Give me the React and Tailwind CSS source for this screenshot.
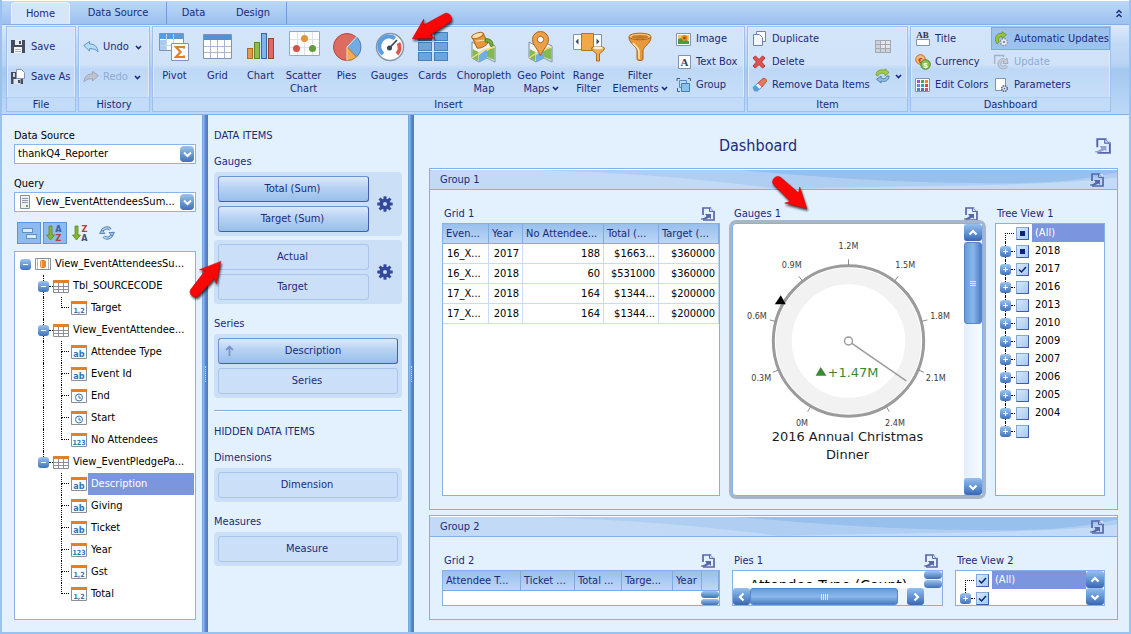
import React, { useState } from 'react';
import clsx from 'clsx';

const Svg = ({ w = 16, h = 16, className, children }) => (
  <svg width={w} height={h} viewBox={`0 0 ${w} ${h}`} className={clsx('shrink-0', className)} fill="none" aria-hidden="true">
    {children}
  </svg>
);

/* ---------- small icons ---------- */

const Chevron = () => (
  <Svg w={7} h={5}>
    <path d="M1 1l2.500 2.500L6 1" stroke="#1b2a7d" strokeWidth="1.600" />
  </Svg>
);

const SaveIcon = () => (
  <Svg>
    <path d="M0 1h14v13H0z" fill="#454c5c" />
    <path d="M4 1h7v5H4z" fill="#e8edf5" />
    <path d="M8 2h2v3H8z" fill="#454c5c" />
    <path d="M3 8h8v6H3z" fill="#f4f6fa" />
    <path d="M4 10.500h6M4 12.500h6" stroke="#aab3c4" />
  </Svg>
);

const SaveAsIcon = () => (
  <Svg>
    <path d="M0 3h12v12H0z" fill="#454c5c" />
    <path d="M2.500 10h7v5h-7z" fill="#dfe6f0" />
    <path d="M7 11h2v3H7z" fill="#454c5c" />
    <path d="M5.500 0.500h5l3 3v6h-8z" fill="#fff" stroke="#8796b4" />
    <path d="M2 4h2v4H2z" fill="#cfd7e6" />
  </Svg>
);

const UndoIcon = () => (
  <Svg>
    <path d="M0.700 6.500L6.500 2.500v2.500c5 0 8 2.500 8.500 8-2-2.500-4.500-3.500-8.500-3.300v2.300z" fill="#b9dcf4" stroke="#5a95c6" />
  </Svg>
);

const RedoIcon = () => (
  <Svg>
    <path d="M15.300 6.500L9.500 2.500v2.500c-5 0-8 2.500-8.500 8 2-2.500 4.500-3.500 8.500-3.300v2.300z" fill="#bfc3cd" stroke="#9ba4b8" />
  </Svg>
);

const ImageIcon = () => (
  <Svg>
    <path d="M0.500 2.500h14v12h-14z" fill="#fff" stroke="#7f93b5" />
    <path d="M2 4h11v5H2z" fill="#f7c66b" />
    <path d="M2 8l4-1 7 3v3H2z" fill="#4d9a3a" />
    <circle cx="8.500" cy="7" r="3" fill="#e8891c" />
    <circle cx="8.500" cy="7" r="1.200" fill="#8c4a12" />
  </Svg>
);

const TextBoxIcon = () => (
  <Svg>
    <path d="M2.500 1.500h12v13h-12z" fill="#fff" stroke="#7f93b5" />
    <text x="8.500" y="12" textAnchor="middle" fontFamily="Liberation Serif, serif" fontWeight="bold" fontSize="11" fill="#33405f">A</text>
  </Svg>
);

const GroupIcon = () => (
  <Svg>
    <path d="M3.500 3.500h7v7h-7z" fill="#b9dcf4" stroke="#4f8fc4" />
    <path d="M5.500 6.500h8v8h-8z" fill="#8cc2ea" stroke="#3f7fba" />
    <path d="M1 4V1.500h3M12 1.500h2.500V4M1.500 11v3.500H4" stroke="#4a5a7c" />
  </Svg>
);

const DuplicateIcon = () => (
  <Svg>
    <path d="M4.500 0.500h9v10h-9z" fill="#fff" stroke="#6d83b3" />
    <path d="M1.500 3.500h6l3 3v8h-9z" fill="#f3f7fd" stroke="#6d83b3" />
  </Svg>
);

const DeleteIcon = () => (
  <Svg>
    <path d="M1 4l2.500-2L7 5.500l3.500-3.500L13 4 9.500 8l3.500 4-2.500 2L7 10.500 3.500 14 1 12l3.500-4z" fill="#e0524e" stroke="#b23232" />
  </Svg>
);

const EraserIcon = () => (
  <Svg>
    <path d="M6 6l5-4.500c1.500-.8 4 .8 3.500 3L10 10z" fill="#e9775c" stroke="#b9533a" />
    <path d="M6 6l4 4-4.500 4H2.500L1 10.500z" fill="#e9f1fb" stroke="#6f93c4" />
    <path d="M1 10.500L3.500 8l4 4-2 2H2.500z" fill="#5b9bdc" />
  </Svg>
);

const GridGrayIcon = () => (
  <Svg>
    <path d="M0 2h16v13H0z" fill="#a3a8b1" />
    {[3, 7, 11].map((y) =>
      [1, 6, 11].map((x) => <rect key={`${x}-${y}`} x={x} y={y} width="4" height="3" fill={x === 1 || y === 11 ? '#cdd1d8' : '#e3e6ea'} />)
    )}
  </Svg>
);

const ConvertIcon = () => (
  <Svg>
    <path d="M1 7c0-5 6-6 9-4.500V.8l4 3.700-4 3.500V6C7 4.500 4 5 3 8z" fill="#a5ca4b" stroke="#6f9a28" strokeWidth="0.800" />
    <path d="M14 8c0 5-5 6.500-8 5v2l-4.500-3.700 4.500-3.300v2c3 1.500 5 .5 6-2z" fill="#8fbde3" stroke="#45739f" strokeWidth="0.800" />
  </Svg>
);

const TitleIcon = () => (
  <Svg>
    <text x="7.500" y="7" textAnchor="middle" fontFamily="Liberation Serif, serif" fontWeight="bold" fontSize="9" fill="#2c3350">AB</text>
    <path d="M1.500 8.500h13v6h-13z" fill="#fff" stroke="#7f93b5" />
  </Svg>
);

const CurrencyIcon = () => (
  <Svg>
    <circle cx="5.500" cy="5.500" r="4.800" fill="#f6b98a" stroke="#d3641c" />
    <text x="5.500" y="8.500" textAnchor="middle" fontFamily="Liberation Sans, sans-serif" fontWeight="bold" fontSize="8" fill="#b8480f">€</text>
    <circle cx="10.500" cy="10.500" r="4.800" fill="#8fc04a" stroke="#4f8424" />
    <text x="10.500" y="13.500" textAnchor="middle" fontFamily="Liberation Sans, sans-serif" fontWeight="bold" fontSize="8" fill="#fff">$</text>
  </Svg>
);

const swatches = ['#8b5cc0', '#57a244', '#ea8a2f', '#4f8fdc', '#3f9fb0', '#d9483b', '#4f7fd0', '#7a5cc0', '#c0508a'];

const ColorsIcon = () => (
  <Svg>
    <path d="M0.500 1.500h14v13h-14z" fill="#fff" stroke="#7f93b5" />
    {swatches.map((c, i) => (
      <rect key={c} x={2 + (i % 3) * 4} y={3 + Math.floor(i / 3) * 4} width="3" height="3" fill={c} />
    ))}
  </Svg>
);

const AutoUpdateIcon = () => (
  <Svg>
    <path d="M3 13C-1 7 3 1.500 8 2.500V.8l4.500 3L8 7.500v-2C5 5 3.500 8 5 11z" fill="#9bc53d" stroke="#62902a" strokeWidth="0.800" />
    <circle cx="10" cy="11" r="3.500" fill="#eef2f7" stroke="#8d97a8" strokeWidth="1.500" strokeDasharray="1.800 0.900" />
    <circle cx="10" cy="11" r="1.300" fill="#8d97a8" />
  </Svg>
);

const UpdateIcon = () => (
  <Svg>
    <path d="M0.500 10V1.500h9V3" stroke="#a7b0c0" strokeWidth="1.500" />
    <path d="M13.500 13c-3 3-9 2-9.500-2.500-.5-5 4.500-7 7.500-5L13 4l1 5.500H9l1.300-1.800C8 7 6 8.500 6.800 10.700c.7 1.800 3 2 4.500.3z" fill="#c9ced8" stroke="#98a2b5" strokeWidth="0.800" />
  </Svg>
);

const ParametersIcon = () => (
  <Svg>
    <path d="M1.500 1.500h10v12h-10z" fill="#fff" stroke="#7f93b5" />
    <circle cx="10.500" cy="11.500" r="2.800" fill="#dfe6f0" stroke="#55637f" strokeDasharray="1.500 0.700" strokeWidth="1.500" />
    <circle cx="10.500" cy="11.500" r="0.800" fill="#55637f" />
  </Svg>
);

const ExportIcon = ({ large }) => (
  <svg width={large ? 16 : 14} height={large ? 16 : 14} viewBox="0 0 14 14" className="shrink-0" fill="none" aria-hidden="true">
    <path d="M2 8V1h7.500L13 4.500V13H2" stroke="#5766ab" strokeWidth="1.700" />
    <path d="M9 1l4 4V1z" fill="#e3f0fe" fillOpacity="0.800" />
    <path d="M8.500 1v3.500h4.200" stroke="#5766ab" />
    <path d="M0 11.500c2.500 0 4.500-1 5.500-2.500L4 7h6v5L8.300 10.500C6.500 12 3 13 0 12.500z" fill={large ? '#95a3d6' : '#5766ab'} />
  </svg>
);

const Gear = () => (
  <Svg>
    <circle cx="8" cy="8" r="3.800" stroke="#34489c" strokeWidth="3.600" />
    {[0, 45, 90, 135, 180, 225, 270, 315].map((a) => (
      <rect key={a} x="6.500" y="0.300" width="3" height="3.500" fill="#34489c" transform={`rotate(${a} 8 8)`} />
    ))}
  </Svg>
);

/* ---------- large ribbon icons ---------- */

const PivotIcon = () => (
  <Svg w={32} h={32}>
    <path d="M0.500 2.500h24v17h-24z" fill="#fff" stroke="#7f93b5" />
    <path d="M1 3h23v5H1z" fill="#5b9bdb" />
    <path d="M1 9h6v10H1z" fill="#a9ccef" />
    <path d="M1 14.500h23M7.500 3v16M14.500 3v16" stroke="#c3d3e9" />
    <path d="M12.500 12.500h17v17h-17z" fill="#f8fafd" stroke="#7f93b5" />
    <path d="M25 17.500V16h-8l4.500 5-4.500 5h8v-1.500" stroke="#e0822a" strokeWidth="2.200" />
  </Svg>
);

const GridIcon = () => (
  <Svg w={32} h={32}>
    <path d="M1.500 3.500h28v24h-28z" fill="#fff" stroke="#7f93b5" />
    <path d="M2 4h27v5H2z" fill="#4f93d6" />
    <path d="M2 15.500h27M2 21.500h27M8.500 9v18M15.500 9v18M22.500 9v18" stroke="#a9b6cd" />
  </Svg>
);

const ChartIcon = () => (
  <Svg w={32} h={32}>
    <rect x="2.500" y="17.500" width="5" height="10" fill="#e79a45" stroke="#b36a1c" />
    <rect x="9.500" y="11.500" width="5" height="16" fill="#8dbd4d" stroke="#5a8a28" />
    <rect x="16.500" y="2.500" width="5" height="25" fill="#7db4ea" stroke="#36699f" />
    <rect x="23.500" y="7.500" width="5" height="20" fill="#dd6b62" stroke="#a83a36" />
  </Svg>
);

const ScatterIcon = () => (
  <Svg w={32} h={32}>
    <path d="M1.500 0.500h30v24h-30z" fill="#fdfdfd" stroke="#9aa7bd" />
    <path d="M2 8.500h29M2 16.500h29M9.500 1v23M16.500 1v23M24.500 1v23" stroke="#dde2ea" />
    <circle cx="16.500" cy="7.500" r="3.500" fill="#e2943c" />
    <circle cx="8.500" cy="17.500" r="3.500" fill="#d25149" />
    <circle cx="24.500" cy="17.500" r="3.500" fill="#5f9d3a" />
  </Svg>
);

const PiesIcon = () => (
  <Svg w={32} h={32}>
    <circle cx="16" cy="16" r="13.500" fill="#dd6b60" stroke="#b5443d" />
    <path d="M16 16L25.500 6A13.500 13.500 0 0 1 25.500 26z" fill="#73ace2" stroke="#4b82bd" />
    <path d="M16 16L25.500 26A13.500 13.500 0 0 1 16 29.500z" fill="#efab55" stroke="#c07c28" />
    <path d="M16 16V29.500" stroke="#fbe3df" />
    <path d="M16 16L25.500 6" stroke="#e9f2fb" />
  </Svg>
);

const GaugesIcon = () => (
  <Svg w={32} h={32}>
    <circle cx="16" cy="16" r="13.500" fill="#fff" stroke="#8794ad" strokeWidth="1.500" />
    <path d="M9 23A9.500 9.500 0 0 1 21 7.500" stroke="#5d9fdd" strokeWidth="4" />
    <path d="M24.500 12A9.500 9.500 0 0 1 23 23" stroke="#d9574d" strokeWidth="4" />
    <circle cx="15.500" cy="17" r="2.500" fill="#3a4762" />
    <path d="M15.500 17L23 9" stroke="#3a4762" strokeWidth="1.800" />
  </Svg>
);

const CardsIcon = () => (
  <Svg w={32} h={32}>
    {[1.5, 11.5, 21.5].map((y) =>
      [1.5, 17.5].map((x) => <rect key={`${x}-${y}`} x={x} y={y} width="13" height="8" fill="#6aa5de" stroke="#4680bd" />)
    )}
  </Svg>
);

const MapSheet = () => (
  <>
    <path d="M4 11l7 4 8-4 8 4v16l-8-4-8 4-7-4z" fill="#eef3f5" stroke="#7d8da8" />
    <path d="M4.500 18l6 3v9l-6-3zM19 20l7.500-5v14L19 26z" fill="#83b952" />
    <path d="M11 24l8-6v9l-8 4z" fill="#6fb0e4" />
    <path d="M4 27L16 19l11-3" stroke="#f2d878" strokeWidth="1.500" />
  </>
);

const ChoroplethIcon = () => (
  <Svg w={32} h={32}>
    <MapSheet />
    <path d="M4 6l5 11c3 1 9-2 11-5L15 2z" fill="#e9973b" stroke="#a8631b" />
    <ellipse cx="9.500" cy="4.500" rx="6" ry="2.500" fill="#fbe0a8" stroke="#a8631b" transform="rotate(-20 9.500 4.500)" />
    <path d="M8 10c5 0 9-1 13-2" stroke="#fbe0a8" strokeWidth="1.200" />
    <path d="M17 8c5-1 8 2 8 6 0 2-3 2-3 0 0-3-2-3-5-3z" fill="#7cae37" stroke="#4f7f22" />
  </Svg>
);

const GeoIcon = () => (
  <Svg w={32} h={32}>
    <MapSheet />
    <path d="M15.500 25C13 18 7.500 14 7.500 8.500a8 8 0 0 1 16 0C23.500 14 18 18 15.500 25z" fill="#eba04a" stroke="#a8631b" />
    <circle cx="15.500" cy="8.500" r="3.200" fill="#fff" stroke="#a8631b" />
  </Svg>
);

const RangeIcon = () => (
  <Svg w={34} h={32}>
    <path d="M1.500 3.500h28v15h-28z" fill="#fff" stroke="#8291ac" />
    <path d="M9.500 2.500h12v17h-12z" fill="#f0a848" stroke="#b7741f" />
    <path d="M6.500 7.500v6L3.500 10.500zM24.500 7.500v6l3-3z" fill="#3d4a66" />
    <path d="M19.500 17c0-1.500 13-1.500 13 0 0 3-4 4-5 6v7h-3v-7c-1-2-5-3-5-6z" fill="#efab55" stroke="#ab6a1d" />
    <ellipse cx="26" cy="17" rx="5" ry="1.300" fill="#fff0d2" />
  </Svg>
);

const FilterIcon = () => (
  <Svg w={32} h={32}>
    <path d="M5 6c0 7 8 9 8 14v8c0 2 6 2 6 0v-8c0-5 8-7 8-14z" fill="#e8993d" stroke="#a8631b" />
    <ellipse cx="16" cy="5.500" rx="11" ry="3.300" fill="#f9c777" stroke="#a8631b" />
    <ellipse cx="16" cy="6" rx="8.500" ry="2" fill="#c77a26" />
    <path d="M9 12c2 3 6 4 6 9v7" stroke="#ffe1ab" strokeWidth="1.600" />
  </Svg>
);

/* ---------- tree icons ---------- */

const TableIcon = () => (
  <Svg>
    <path d="M0.500 2.500h15v12h-15z" fill="#fff" stroke="#8b8f98" />
    <path d="M0 2h16v3H0z" fill="#e0812a" />
    <path d="M1 8.500h14M1 11.500h14M5.500 5v9M10.500 5v9" stroke="#8b8f98" />
  </Svg>
);

const QueryIcon = () => (
  <Svg>
    <path d="M0.500 2.500h15v11h-15z" fill="#fff" stroke="#8b8f98" />
    <path d="M2.500 3v10M13.500 3v10" stroke="#b7bbc3" />
    <rect x="5" y="4" width="6" height="8" rx="2" fill="#e58a33" />
    <path d="M6.500 5v6" stroke="#fbd3a0" />
  </Svg>
);

const FieldIcon = ({ kind }) => (
  <Svg>
    <path d="M0.500 2.500h15v12h-15z" fill="#fff" stroke="#8b8f98" />
    <path d="M0 1h16v3H0z" fill="#e0812a" />
    {kind === 'time' ? (
      <>
        <circle cx="8" cy="9.500" r="3.500" stroke="#2e75b6" />
        <path d="M8 7.500v2.500h2" stroke="#2e75b6" />
      </>
    ) : (
      <text x="8" y="13" textAnchor="middle" fontFamily="DejaVu Sans Condensed, sans-serif" fontWeight="bold" fontSize={kind === 'ab' ? 9 : 7} fill="#2e75b6">
        {kind}
      </text>
    )}
  </Svg>
);

const ServerIcon = () => (
  <Svg>
    <path d="M3.500 1.500h9v13h-9z" fill="#eef0f3" stroke="#8b8f98" />
    <path d="M5 4.500h6M5 6.500h6M5 8.500h6" stroke="#9298a3" />
    <path d="M9 11h2v2H9z" fill="#6ca53c" />
  </Svg>
);

const SortIcon = ({ first, second, firstColor, secondColor }) => (
  <Svg w={18} h={18}>
    <path d="M3 2h3v9h2.500l-4 5-4-5H3z" fill="#86b436" stroke="#5c8a1e" strokeWidth="0.800" />
    <text x="12.500" y="8" textAnchor="middle" fontFamily="DejaVu Sans Condensed, sans-serif" fontWeight="bold" fontSize="9" fill={firstColor}>{first}</text>
    <text x="12.500" y="17" textAnchor="middle" fontFamily="DejaVu Sans Condensed, sans-serif" fontWeight="bold" fontSize="9" fill={secondColor}>{second}</text>
  </Svg>
);

const GroupFieldsIcon = () => (
  <Svg>
    <rect x="1.500" y="3.500" width="10" height="4" fill="#d9eaf8" stroke="#6292c0" />
    <rect x="5.500" y="9.500" width="10" height="4" fill="#d9eaf8" stroke="#6292c0" />
  </Svg>
);

const RefreshIcon = () => (
  <Svg>
    <path d="M3 9a5 5 0 0 1 8.500-4.500M13 7a5 5 0 0 1-8.500 4.500" stroke="#4f7cb0" strokeWidth="3" />
    <path d="M3 9a5 5 0 0 1 8.500-4.500M13 7a5 5 0 0 1-8.500 4.500" stroke="#c3dff6" strokeWidth="1.200" />
    <path d="M10 7.500h5.500L13 11zM6 8.500H.5L3 5z" fill="#9cc6ea" stroke="#4f7cb0" strokeWidth="0.800" />
  </Svg>
);

const RedArrow = ({ angle, className }) => (
  <svg width="48" height="48" viewBox="-24 -24 48 48" className={clsx('pointer-events-none absolute z-10 overflow-visible drop-shadow-[1px_2px_1px_rgba(0,0,0,0.7)]', className)} aria-hidden="true">
    <path
      d="M-18 -5C-23 -4 -23 4 -18 5L6 6L3 11L23 0L3 -11L6 -6Z"
      fill="#f90606"
      stroke="#d00000"
      strokeWidth="0.500"
      strokeLinejoin="round"
      transform={`rotate(${angle})`}
    />
  </svg>
);

/* ---------- ribbon ---------- */

const RibbonGroup = ({ label, className, children }) => (
  <section className={clsx('flex h-[86px] shrink-0 flex-col border border-[#9dc1ee] bg-[linear-gradient(#d4e5f9_0%,#cfe2f8_45%,#bdd8f6_50%,#cce1f9_100%)] shadow-[inset_0_0_0_1px_#dceafb]', className)}>
    <div className="flex flex-1">{children}</div>
    <h2 className="h-3.5 border-t border-[#b3cff1] bg-[#c1dbf8] text-center leading-[14px]">{label}</h2>
  </section>
);

const SmallButton = ({ icon, label, menu, disabled, active, className }) => (
  <button
    type="button"
    disabled={disabled}
    className={clsx('flex items-center gap-1 whitespace-nowrap', disabled && 'text-[#8fa9d6]', active && 'bg-[#9cc2f0] shadow-[inset_0_0_0_1px_#7fabe4]', className)}
  >
    {icon}
    <span>{label}</span>
    {menu && <span className="ml-0.5"><Chevron /></span>}
  </button>
);

const LargeButton = ({ icon, lines, menu, className, children }) => (
  <div className={clsx('relative flex', className)}>
    <button type="button" className="flex w-full flex-col items-center pt-1 leading-[13px] whitespace-nowrap">
      {icon}
      <span className="mt-1.5">{lines[0]}</span>
      {lines[1] && (
        <span className="flex items-center gap-0.5">
          {lines[1]}
          {menu && <Chevron />}
        </span>
      )}
    </button>
    {children}
  </div>
);

const tabs = [
  { name: 'Home', className: 'w-[59px]' },
  { name: 'Data Source', className: 'w-[97px] border-r border-[#6f9ad8]' },
  { name: 'Data', className: 'w-[53px]' },
  { name: 'Design', className: 'w-[67px] border-r border-[#6f9ad8]' },
];

const Ribbon = () => {
  const [tab, setTab] = useState('Home');

  return (
    <header>
      <nav className="flex h-6 items-end border-t border-white bg-[linear-gradient(#bcd8f8,#9bc1ee)] pl-[9px]">
        {tabs.map((t) => (
          <button
            key={t.name}
            type="button"
            onClick={() => setTab(t.name)}
            className={clsx('h-[22px] leading-[20px]', t.className, t.name === tab && 'rounded-t-sm border border-b-0 border-[#e9f2fd] bg-[#d6e6fa]')}
          >
            {t.name}
          </button>
        ))}
        <button type="button" aria-label="Collapse ribbon" className="mr-1.5 mb-1.5 ml-auto">
          <Svg w={8} h={9}>
            <path d="M1.500 4L4 1.500 6.500 4M1.500 8L4 5.500 6.500 8" stroke="#1b2a7d" strokeWidth="1.400" />
          </Svg>
        </button>
      </nav>

      <div className="flex gap-0.5 border-t border-b border-[#86aee6] bg-[linear-gradient(#dceafb_0%,#c3daf6_20%,#b8d3f4_45%,#a5c8f0_50%,#bcd8f7_100%)] pt-px pb-0.5 pl-1">
        <RibbonGroup label="File" className="w-[70px]">
          <div className="flex flex-col pt-[5px] pl-1">
            <SmallButton icon={<SaveIcon />} label="Save" className="h-[30px]" />
            <SmallButton icon={<SaveAsIcon />} label="Save As" className="h-[30px]" />
          </div>
        </RibbonGroup>

        <RibbonGroup label="History" className="w-[72px]">
          <div className="flex flex-col pt-[5px] pl-1">
            <SmallButton icon={<UndoIcon />} label="Undo" menu className="h-[30px]" />
            <SmallButton icon={<RedoIcon />} label="Redo" menu disabled className="h-[30px]" />
          </div>
        </RibbonGroup>

        <RibbonGroup label="Insert" className="w-[593px]">
          <LargeButton icon={<PivotIcon />} lines={['Pivot']} className="w-[43px]" />
          <LargeButton icon={<GridIcon />} lines={['Grid']} className="w-[43px]" />
          <LargeButton icon={<ChartIcon />} lines={['Chart']} className="w-[43px]" />
          <LargeButton icon={<ScatterIcon />} lines={['Scatter', 'Chart']} className="w-[43px]" />
          <LargeButton icon={<PiesIcon />} lines={['Pies']} className="w-[43px]" />
          <LargeButton icon={<GaugesIcon />} lines={['Gauges']} className="w-[43px]">
            <RedArrow angle={149} className="-top-6 left-10" />
          </LargeButton>
          <LargeButton icon={<CardsIcon />} lines={['Cards']} className="w-[43px]" />
          <LargeButton icon={<ChoroplethIcon />} lines={['Choropleth', 'Map']} className="w-[60px]" />
          <LargeButton icon={<GeoIcon />} lines={['Geo Point', 'Maps']} menu className="w-[54px]" />
          <LargeButton icon={<RangeIcon />} lines={['Range', 'Filter']} className="w-[41px]" />
          <LargeButton icon={<FilterIcon />} lines={['Filter', 'Elements']} menu className="w-[62px]" />
          <div className="flex flex-col pl-[5px]">
            <SmallButton icon={<ImageIcon />} label="Image" className="h-[23px]" />
            <SmallButton icon={<TextBoxIcon />} label="Text Box" className="h-[23px]" />
            <SmallButton icon={<GroupIcon />} label="Group" className="h-[23px]" />
          </div>
        </RibbonGroup>

        <RibbonGroup label="Item" className="w-[161px]">
          <div className="flex w-[127px] flex-col pl-1">
            <SmallButton icon={<DuplicateIcon />} label="Duplicate" className="h-[23px]" />
            <SmallButton icon={<DeleteIcon />} label="Delete" className="h-[23px]" />
            <SmallButton icon={<EraserIcon />} label="Remove Data Items" className="h-[23px]" />
          </div>
          <div className="flex flex-col pt-1">
            <button type="button" aria-label="Transpose" className="h-[30px]"><GridGrayIcon /></button>
            <button type="button" aria-label="Convert to" className="flex h-[30px] items-center gap-1"><ConvertIcon /><Chevron /></button>
          </div>
        </RibbonGroup>

        <RibbonGroup label="Dashboard" className="w-[201px]">
          <div className="flex w-20 flex-col pl-1">
            <SmallButton icon={<TitleIcon />} label="Title" className="h-[23px]" />
            <SmallButton icon={<CurrencyIcon />} label="Currency" className="h-[23px]" />
            <SmallButton icon={<ColorsIcon />} label="Edit Colors" className="h-[23px]" />
          </div>
          <div className="flex flex-1 flex-col">
            <SmallButton icon={<AutoUpdateIcon />} label="Automatic Updates" active className="h-[23px] pl-[3px]" />
            <SmallButton icon={<UpdateIcon />} label="Update" disabled className="h-[23px] pl-[3px]" />
            <SmallButton icon={<ParametersIcon />} label="Parameters" className="h-[23px] pl-[3px]" />
          </div>
        </RibbonGroup>
      </div>
    </header>
  );
};

/* ---------- data source pane ---------- */

const Select = ({ id, value, icon }) => (
  <div className="flex h-5 items-center border border-[#8db3e8] bg-white">
    {icon && <span className="pl-0.5">{icon}</span>}
    <div className="relative h-full min-w-0 flex-1">
      <select id={id} className="h-full w-full appearance-none bg-transparent pr-4 pl-[3px] text-black outline-none">
        <option>{value}</option>
      </select>
      <span className="pointer-events-none absolute top-px right-px flex h-4 w-[14px] items-center justify-center rounded-sm bg-[linear-gradient(#9cc4ef,#3f6fb8)]">
        <Svg w={9} h={7}>
          <path d="M1 1.500l3.500 3.500L8 1.500" stroke="#fff" strokeWidth="2" />
        </Svg>
      </span>
    </div>
  </div>
);

const Toggle = ({ open }) => (
  <button
    type="button"
    aria-label={open ? 'Collapse' : 'Expand'}
    className="flex h-[11px] w-[11px] shrink-0 items-center justify-center rounded-[3px] bg-[linear-gradient(#9cc4ef,#3e72bb)]"
  >
    <Svg w={7} h={7}>
      <path d={open ? 'M1 3.500h5' : 'M1 3.500h5M3.500 1v5'} stroke="#fff" />
    </Svg>
  </button>
);

const fields = [
  {
    name: 'Tbl_SOURCECODE',
    children: [{ name: 'Target', kind: '1,2' }],
  },
  {
    name: 'View_EventAttendee...',
    children: [
      { name: 'Attendee Type', kind: 'ab' },
      { name: 'Event Id', kind: 'ab' },
      { name: 'End', kind: 'time' },
      { name: 'Start', kind: 'time' },
      { name: 'No Attendees', kind: '123' },
    ],
  },
  {
    name: 'View_EventPledgePa...',
    children: [
      { name: 'Description', kind: 'ab', selected: true },
      { name: 'Giving', kind: 'ab' },
      { name: 'Ticket', kind: 'ab' },
      { name: 'Year', kind: '123' },
      { name: 'Gst', kind: '1,2' },
      { name: 'Total', kind: '1,2' },
    ],
  },
];

const FieldTree = () => (
  <ul className="mt-[7px] flex-1 border border-[#8db3e8] bg-white px-px pt-px whitespace-nowrap text-black">
    <li>
      <div className="flex h-[22px] items-center pl-1">
        <Toggle open />
        <span className="ml-1 flex items-center gap-1"><QueryIcon />View_EventAttendeesSu...</span>
      </div>
      <ul>
        {fields.map((table, t) => (
          <li key={table.name}>
            <div className="flex h-[22px] items-center pl-[22px]">
              <div className="flex h-full flex-col items-center">
                <span className="flex-1 border-l border-dotted border-black" />
                <Toggle open />
                <span className={clsx('flex-1 border-l border-dotted', t < fields.length - 1 ? 'border-black' : 'border-transparent')} />
              </div>
              <span className="w-1 border-t border-dotted border-black" />
              <span className="flex items-center gap-1"><TableIcon />{table.name}</span>
            </div>
            <ul>
              {table.children.map((field, i) => (
                <li key={field.name} className="flex h-[22px] items-center pl-[27px]">
                  <span className={clsx('h-full w-[18px] border-l border-dotted', t < fields.length - 1 ? 'border-black' : 'border-transparent')} />
                  <span className="mr-0.5 flex h-full w-2 flex-col">
                    <span className="h-[11px] border-b border-l border-dotted border-black" />
                    <span className={clsx('h-[11px] border-l border-dotted', i < table.children.length - 1 ? 'border-black' : 'border-transparent')} />
                  </span>
                  <FieldIcon kind={field.kind} />
                  <span className={clsx('ml-px h-full flex-1 pl-[3px] leading-[22px]', field.selected && 'bg-[#7b95de] text-white')}>{field.name}</span>
                </li>
              ))}
            </ul>
          </li>
        ))}
      </ul>
    </li>
  </ul>
);

const SourcePane = () => (
  <aside className="flex w-[200px] shrink-0 flex-col pt-[14px] pr-1.5 pb-3 pl-3">
    <label htmlFor="source" className="mb-px text-black">Data Source</label>
    <Select id="source" value="thankQ4_Reporter" />
    <label htmlFor="query" className="mt-[13px] mb-px text-black">Query</label>
    <Select id="query" value="View_EventAttendeesSum..." icon={<ServerIcon />} />
    <div className="mt-2.5 flex h-[22px] items-center gap-0.5 pl-[3px]">
      <button type="button" aria-label="Group fields" className="flex h-full w-6 items-center justify-center border border-[#5f93db] bg-[#8fbaf0]"><GroupFieldsIcon /></button>
      <button type="button" aria-label="Sort ascending" className="flex h-full w-6 items-center justify-center border border-[#5f93db] bg-[#8fbaf0]"><SortIcon first="A" second="Z" firstColor="#3a5fa8" secondColor="#c23a35" /></button>
      <button type="button" aria-label="Sort descending" className="flex h-full w-6 items-center justify-center"><SortIcon first="Z" second="A" firstColor="#c23a35" secondColor="#4b4f7a" /></button>
      <button type="button" aria-label="Refresh" className="flex h-full w-6 items-center justify-center"><RefreshIcon /></button>
    </div>
    <FieldTree />
  </aside>
);

const Splitter = () => (
  <div className="flex w-1.5 shrink-0 items-center justify-center bg-[linear-gradient(90deg,#6d9fdb_0,#8fbcf0_30%,#5d8fd0_50%,#4a78bd_100%)]">
    <span className="h-4 border-l border-dotted border-[#c9def6]" />
  </div>
);

/* ---------- data items pane ---------- */

const DataItem = ({ filled, sorted, children }) => (
  <button
    type="button"
    className={clsx(
      'flex h-[26px] w-full items-center rounded-[3px] border',
      filled ? 'border-[#6f93cf] border-r-[#4060ae] border-b-[#4060ae] bg-[linear-gradient(#dbe9fa_0%,#b7d2f2_45%,#97bfea_100%)]' : 'border-[#a9c3ea] bg-[#cbe0f8]'
    )}
  >
    {sorted && (
      <span className="-mr-2 w-5 pl-1.5">
        <Svg w={9} h={12}>
          <path d="M4.500 11V2M1 5l3.500-3.500L8 5" stroke="#7b93cc" strokeWidth="1.800" />
        </Svg>
      </span>
    )}
    <span className="flex-1 pr-0.5">{children}</span>
  </button>
);

const ItemBox = ({ gear, children }) => (
  <div className="flex items-center rounded bg-[#cbe0f7] p-1">
    <div className="flex flex-1 flex-col gap-1">{children}</div>
    {gear && <button type="button" aria-label="Options" className="ml-2 pr-[5px]"><Gear /></button>}
  </div>
);

const DataItemsPane = () => (
  <aside className="relative w-[200px] shrink-0 px-1.5 pt-[14px]">
    <h2>DATA ITEMS</h2>
    <h3 className="mt-3 mb-[3px]">Gauges</h3>
    <div className="flex flex-col gap-1">
      <ItemBox gear>
        <DataItem filled>Total (Sum)</DataItem>
        <DataItem filled>Target (Sum)</DataItem>
      </ItemBox>
      <ItemBox gear>
        <DataItem>Actual</DataItem>
        <DataItem>Target</DataItem>
      </ItemBox>
    </div>
    <h3 className="mt-[13px] mb-[3px]">Series</h3>
    <ItemBox>
      <DataItem filled sorted>Description</DataItem>
      <DataItem>Series</DataItem>
    </ItemBox>
    <hr className="mt-3 mb-[13px] h-0.5 border-t border-b border-t-[#86ade6] border-b-white" />
    <h2>HIDDEN DATA ITEMS</h2>
    <h3 className="mt-3 mb-[3px]">Dimensions</h3>
    <ItemBox><DataItem>Dimension</DataItem></ItemBox>
    <h3 className="mt-[13px] mb-[3px]">Measures</h3>
    <ItemBox><DataItem>Measure</DataItem></ItemBox>
    <RedArrow angle={-50} className="top-[140px] -left-[26px]" />
  </aside>
);

/* ---------- dashboard ---------- */

const ScrollButton = ({ dir, className }) => (
  <button type="button" aria-label={`Scroll ${dir}`} className={clsx('flex shrink-0 items-center justify-center overflow-hidden rounded-[3px] bg-[linear-gradient(#94bfee,#5a8dd0_60%,#3a66ae)]', className)}>
    <Svg w={10} h={10}>
      <path
        d={{ up: 'M1.500 6.500L5 3l3.500 3.500', down: 'M1.500 3.500L5 7l3.500-3.500', left: 'M6.500 1.500L3 5l3.500 3.500', right: 'M3.500 1.500L7 5 3.500 8.500' }[dir]}
        stroke="#fff"
        strokeWidth="2.200"
      />
    </Svg>
  </button>
);

// scroll bar of a box too low to hold its arrows
const TinyScroll = ({ className }) => (
  <div className={clsx('flex w-[18px] flex-col gap-px', className)}>
    <span className="flex-1 rounded-sm bg-[linear-gradient(#9cc5f1,#3f6fb8)]" />
    <span className="flex-1 rounded-sm bg-[linear-gradient(#9cc5f1,#3f6fb8)]" />
  </div>
);

const Widget = ({ title, exportable, className, children }) => (
  <section className={clsx('flex min-w-0 flex-col', className)}>
    <div className="flex h-4 items-start justify-between pr-[5px] pl-0.5">
      <h3>{title}</h3>
      {exportable && <button type="button" aria-label={`Export ${title}`}><ExportIcon /></button>}
    </div>
    {children}
  </section>
);

const GroupBox = ({ title, className, children }) => (
  <section className={clsx('flex flex-col border border-[#86b0e6]', className)}>
    <div className="relative flex h-[21px] items-center justify-between border-t border-b border-t-white border-b-[#86b0e6] bg-[linear-gradient(90deg,#c3daf6,#bfd8f5)] pr-[13px] pl-2.5">
      <svg className="absolute inset-0 h-full w-full" viewBox="0 0 688 20" preserveAspectRatio="none" aria-hidden="true">
        <path d="M110 0C200 3 280 10 350 20H688V0z" fill="#b0cef2" />
        <path d="M310 0C420 11 500 14 570 14S660 8 688 3V0z" fill="#98c0ed" />
        <path d="M350 20C480 16 620 18 688 8V20z" fill="#c3dbf7" />
      </svg>
      <h2 className="relative">{title}</h2>
      <button type="button" aria-label={`Export ${title}`} className="relative"><ExportIcon /></button>
    </div>
    {children}
  </section>
);

const thClass = 'h-5 border-r border-b border-[#7fabe4] bg-[linear-gradient(#98bfec,#bdd7f6)] pl-[3px] text-left font-normal whitespace-nowrap overflow-hidden';

const rows = [
  ['16_X...', '2017', '188', '$1663...', '$360000'],
  ['16_X...', '2018', '60', '$531000', '$360000'],
  ['17_X...', '2018', '164', '$1344...', '$200000'],
  ['17_X...', '2018', '164', '$1344...', '$200000'],
];

const GridOne = () => (
  <div className="flex-1 border border-[#86b0e6] bg-white">
    <table className="w-full table-fixed border-separate border-spacing-0">
      <colgroup>
        <col className="w-[46px]" />
        <col className="w-[34px]" />
        <col className="w-[81px]" />
        <col className="w-[55px]" />
        <col />
      </colgroup>
      <thead>
        <tr>
          {['Even...', 'Year', 'No Attendee...', 'Total (...', 'Target (...'].map((h) => (
            <th key={h} className={thClass}>{h}</th>
          ))}
        </tr>
      </thead>
      <tbody className="text-black">
        {rows.map((row, i) => (
          <tr key={i}>
            {row.map((cell, c) => (
              <td key={c} className={clsx('h-5 border-r border-b border-[#c9dcf5] whitespace-nowrap', c === 0 ? 'pl-1' : 'pr-[3px] text-right')}>{cell}</td>
            ))}
          </tr>
        ))}
      </tbody>
    </table>
  </div>
);

const scale = ['0M', '0.3M', '0.6M', '0.9M', '1.2M', '1.5M', '1.8M', '2.1M', '2.4M'];

const Gauge = () => (
  <svg viewBox="0 0 232 244" className="h-[244px] w-full" fontFamily="DejaVu Sans Condensed, sans-serif" role="img" aria-label="2016 Annual Christmas Dinner">
    <circle cx="116" cy="117" r="65" stroke="#f2f2f2" strokeWidth="16" fill="none" />
    <circle cx="116" cy="117" r="75.500" stroke="#9b9b9b" strokeWidth="3" fill="none" />
    {scale.map((label, i) => {
      const a = ((120 + i * 37.5) * Math.PI) / 180;
      const cos = Math.cos(a);
      const sin = Math.sin(a);
      const r = 96 - 3 * Math.abs(sin);
      return (
        <g key={label}>
          <line x1={116 + 76 * cos} y1={117 + 76 * sin} x2={116 + 82 * cos} y2={117 + 82 * sin} stroke="#8a8a8a" />
          <text x={116 + r * cos} y={120 + (r + 2) * sin} textAnchor="middle" fontSize="9" fill="#3c3c3c">{label}</text>
        </g>
      );
    })}
    <line x1="119" y1="119" x2="174" y2="157" stroke="#9b9b9b" strokeWidth="1.500" />
    <circle cx="116" cy="117" r="4" stroke="#9b9b9b" strokeWidth="1.500" fill="#fff" />
    <path d="M42 80l6-9 5 9z" fill="#000" />
    <path d="M83 152l5-9 6 9z" fill="#3a8a35" />
    <text x="95" y="153" fontSize="13" fontFamily="DejaVu Sans, sans-serif" fill="#3a8a35">+1.47M</text>
    <text x="115" y="217" textAnchor="middle" fontSize="13" fontFamily="DejaVu Sans, sans-serif" fill="#1c1c1c">2016 Annual Christmas</text>
    <text x="115" y="235" textAnchor="middle" fontSize="13" fontFamily="DejaVu Sans, sans-serif" fill="#1c1c1c">Dinner</text>
  </svg>
);

const GaugeBox = () => (
  <div className="flex flex-1 rounded-sm border border-[#86b0e6] bg-white ring-3 ring-[#a9b6c9]">
    <div className="min-w-0 flex-1"><Gauge /></div>
    <div className="flex w-[18px] flex-col bg-[linear-gradient(90deg,#e3eefb,#fafcff)]">
      <ScrollButton dir="up" className="h-[17px]" />
      <div className="mt-px flex h-[82px] flex-col items-center justify-center gap-px rounded-[3px] border border-[#5585c8] bg-[linear-gradient(90deg,#6a9bd8,#8ab8ec_50%,#4c7dc4)]">
        {[0, 1, 2].map((i) => <span key={i} className="h-px w-1.5 bg-[#d6e6fa]" />)}
      </div>
      <ScrollButton dir="down" className="mt-auto h-[17px]" />
    </div>
  </div>
);

const CheckBox = ({ label, state }) => {
  const [value, setValue] = useState(state);
  return (
    <span className="flex h-[13px] w-[13px] items-center justify-center border border-[#86a9dc] border-r-[#3f5da8] border-b-[#3f5da8] bg-[linear-gradient(135deg,#d6e8fb,#a9c8f0)]">
      <input
        type="checkbox"
        aria-label={label || '(blank)'}
        checked={Boolean(value)}
        onChange={(e) => setValue(e.target.checked ? 'on' : '')}
        className="absolute h-[13px] w-[13px] appearance-none"
      />
      {value === 'part' && <span className="h-[5px] w-[5px] bg-[#0b2474]" />}
      {value === 'on' && (
        <Svg w={9} h={9}>
          <path d="M1 4.500l2.500 2.500L8 2" stroke="#0b2474" strokeWidth="1.500" />
        </Svg>
      )}
    </span>
  );
};

const CheckTree = ({ items }) => (
  <ul className="min-w-0 flex-1 text-black">
    {items.map(([name, state], i) => (
      <li key={i} className="flex h-[18px] items-center pl-1">
        {i === 0 ? (
          <span className="mr-0.5 flex h-full flex-col justify-end pl-[5px]">
            <span className="h-[9px] w-[9px] border-t border-l border-dotted border-black" />
          </span>
        ) : (
          <>
            <span className="flex h-full flex-col items-center">
              <span className="flex-1 border-l border-dotted border-black" />
              <Toggle />
              <span className={clsx('flex-1 border-l border-dotted', i < items.length - 1 ? 'border-black' : 'border-transparent')} />
            </span>
            <span className="mr-px w-1 border-t border-dotted border-black" />
          </>
        )}
        <CheckBox label={name} state={state} />
        <span className={clsx('ml-[3px] h-full flex-1 pl-[3px] leading-[18px]', i === 0 && 'bg-[#7b95de] text-white')}>{name}</span>
      </li>
    ))}
  </ul>
);

const years = [
  ['(All)', 'part'], ['2018', 'part'], ['2017', 'on'], ['2016'], ['2013'], ['2010'],
  ['2009'], ['2007'], ['2006'], ['2005'], ['2004'], [''],
];

const Dashboard = () => (
  <main className="flex min-w-0 flex-1 flex-col pr-[11px] pb-3 pl-[15px]">
    <div className="flex h-[53px] items-center gap-2 pt-2 pr-[7px]">
      <h1 className="flex-1 text-center text-base">Dashboard</h1>
      <button type="button" aria-label="Export dashboard"><ExportIcon large /></button>
    </div>

    <GroupBox title="Group 1" className="flex-1">
      <div className="grid flex-1 grid-cols-[278fr_251fr_110fr] gap-3 px-3 pt-[17px] pb-[13px]">
        <Widget title="Grid 1" exportable><GridOne /></Widget>
        <Widget title="Gauges 1" exportable className="relative">
          <GaugeBox />
          <RedArrow angle={43} className="-top-[38px] left-[34px]" />
        </Widget>
        <Widget title="Tree View 1">
          <div className="flex flex-1 items-start border border-[#86b0e6] bg-white">
            <CheckTree items={years} />
          </div>
        </Widget>
      </div>
    </GroupBox>

    <GroupBox title="Group 2" className="mt-[5px]">
      <div className="grid grid-cols-[278fr_211fr_150fr] gap-3 px-3 pt-[17px] pb-[13px]">
        <Widget title="Grid 2" exportable>
          <div className="h-9 border border-[#86b0e6] bg-white">
            <table className="w-full table-fixed border-separate border-spacing-0">
              <colgroup>
                <col className="w-[78px]" />
                <col className="w-[54px]" />
                <col className="w-[47px]" />
                <col className="w-[51px]" />
                <col className="w-[29px]" />
                <col />
              </colgroup>
              <thead>
                <tr>
                  {['Attendee T...', 'Ticket ...', 'Total ...', 'Targe...', 'Year', ''].map((h) => (
                    <th key={h} className={thClass}>{h}</th>
                  ))}
                </tr>
              </thead>
            </table>
            <TinyScroll className="ml-auto h-3.5" />
          </div>
        </Widget>

        <Widget title="Pies 1" exportable>
          <div className="flex h-9 border border-[#86b0e6] bg-white">
            <div className="min-w-0 flex-1">
              <div className="h-[17px]">
                <p className="h-3 overflow-hidden pt-1 text-center font-['DejaVu_Sans'] text-[14px] leading-[20px] whitespace-nowrap text-black">Attendee Type (Count)</p>
              </div>
              <div className="flex h-[17px] bg-[#edf4fd]">
                <ScrollButton dir="left" className="w-[17px]" />
                <div className="flex w-[148px] items-center justify-center gap-px rounded-[3px] border border-[#5585c8] bg-[linear-gradient(#6a9bd8,#8ab8ec_50%,#4c7dc4)]">
                  {[0, 1, 2, 3].map((i) => <span key={i} className="h-1.5 w-px bg-[#d6e6fa]" />)}
                </div>
                <ScrollButton dir="right" className="ml-auto w-[17px]" />
              </div>
            </div>
            <div className="w-[18px] bg-[#e3f0fe]">
              <TinyScroll className="h-[17px]" />
            </div>
          </div>
        </Widget>

        <Widget title="Tree View 2">
          <div className="flex h-9 overflow-hidden border border-[#86b0e6] bg-white">
            <CheckTree items={[['(All)', 'on'], ['', 'on']]} />
            <div className="flex w-[18px] flex-col">
              <ScrollButton dir="up" className="h-[17px]" />
              <ScrollButton dir="down" className="h-[17px]" />
            </div>
          </div>
        </Widget>
      </div>
    </GroupBox>
  </main>
);

const App = () => (
  <div className="flex min-h-screen flex-col border-x-2 border-b-2 border-[#9bc1f0] bg-[#e3f0fe] font-['DejaVu_Sans_Condensed','DejaVu_Sans',sans-serif] text-[11px] leading-[14px] text-[#1b2a7d]">
    <Ribbon />
    <div className="flex flex-1">
      <SourcePane />
      <Splitter />
      <DataItemsPane />
      <Splitter />
      <Dashboard />
    </div>
  </div>
);

export default App;
